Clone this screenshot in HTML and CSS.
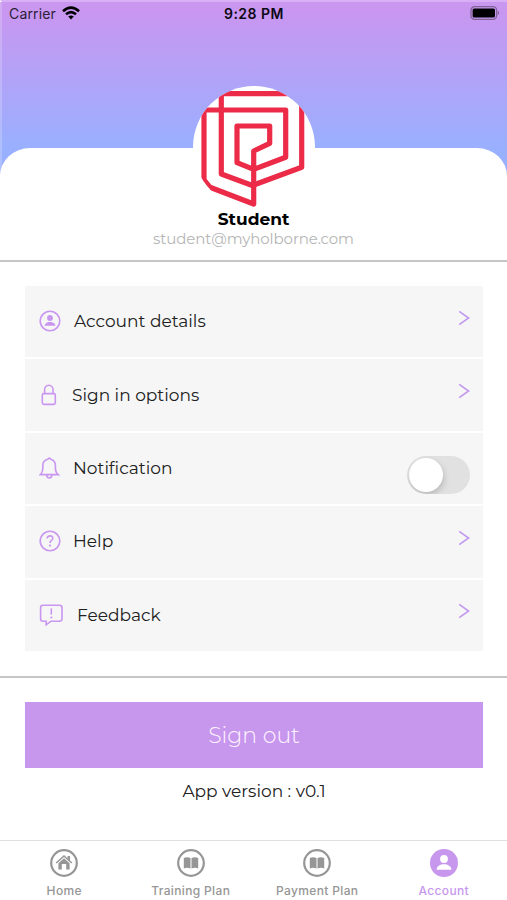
FILE: index.html
```
<!DOCTYPE html>
<html lang="en">
<head>
    <meta charset="UTF-8">
    <meta name="viewport" content="width=device-width, initial-scale=1.0">
    <title>Account</title>
    <link rel="stylesheet" href="styles.css">
</head>
<body>
    <header class="header">
        <div class="status-bar">
            <div class="carrier">
                <span>Carrier</span>
                <svg class="wifi" viewBox="0 0 18 14">
                    <path d="M1 5.2 Q9 -2 17 5.2" stroke-width="2.7"/>
                    <path d="M4 8.3 Q9 4 14 8.3" stroke-width="2.5"/>
                    <path class="wifi-dot" d="M6.2 10.6 Q9 8.4 11.8 10.6 L9 13.6 Z"/>
                </svg>
            </div>
            <div class="time">9:28 PM</div>
            <div class="battery-wrap">
                <svg class="battery" viewBox="0 0 30 14">
                    <rect x="1" y="0.7" width="25.6" height="12.6" rx="3.6" fill="none" stroke="#806396" stroke-width="1.3"/>
                    <rect x="2.6" y="2.4" width="22.4" height="9.2" rx="1.6" fill="#000"/>
                    <path d="M27.8 4.8 Q30.6 7 27.8 9.2 Z" fill="#806396"/>
                </svg>
            </div>
        </div>
    </header>

    <section class="profile">
        <div class="avatar">
            <svg viewBox="0 0 122 122">
                <path d="M60.7 99 L108.7 81.3 V7.7 H28.3 V88 L60.7 100"/>
                <path d="M60.7 83.3 L92.7 71.3 V24 H11 V94 L17 101.3 L60.7 118 V65 L76.7 57.3 V40 H44 V76.7 Z"/>
            </svg>
        </div>
        <h1 class="name">Student</h1>
        <p class="email">student@myholborne.com</p>
    </section>

    <main class="content">
        <ul class="menu">
            <li class="row">
                <svg class="icon" viewBox="0 0 22 22">
                    <circle cx="11" cy="11" r="9.8"/>
                    <circle class="solid" cx="11" cy="8" r="2.9"/>
                    <path class="solid" d="M5.6 15.8 C5.6 10.6 16.4 10.6 16.4 15.8 Z"/>
                </svg>
                <span class="label account">Account details</span>
                <svg class="chevron" viewBox="0 0 12 16"><path d="M1.2 1.4 L10.6 8 L1.2 14.6"/></svg>
            </li>
            <li class="row">
                <svg class="icon" viewBox="0 0 22 22">
                    <rect x="3.3" y="9.6" width="13" height="10.8" rx="1.6"/>
                    <path d="M5.6 9.6 V5.6 A4.2 4.4 0 0 1 14 5.6 V9.6"/>
                </svg>
                <span class="label sign-in">Sign in options</span>
                <svg class="chevron" viewBox="0 0 12 16"><path d="M1.2 1.4 L10.6 8 L1.2 14.6"/></svg>
            </li>
            <li class="row">
                <svg class="icon" viewBox="0 0 22 22">
                    <path d="M1.4 17.6 C3.2 16 3.8 14.4 3.8 11.6 V8.6 C3.8 5.4 6 3 8.8 2.3 Q10.3 0 11.8 2.3 C14.6 3 16.4 5.4 16.4 8.6 V11.6 C16.4 14.4 17.2 16 19.2 17.6 Z"/>
                    <path d="M7.7 17.8 C7.8 22 12.8 22 12.9 17.8"/>
                </svg>
                <span class="label notification">Notification</span>
                <span class="toggle"><span class="knob"></span></span>
            </li>
            <li class="row">
                <svg class="icon" viewBox="0 0 22 22">
                    <circle cx="11" cy="11" r="9.8"/>
                    <path d="M8.2 8.6 C8.3 5 13.8 5 13.8 8.4 C13.8 10.5 11 10.4 11 12.9"/>
                    <circle class="solid" cx="11" cy="15.6" r="1.1"/>
                </svg>
                <span class="label help">Help</span>
                <svg class="chevron" viewBox="0 0 12 16"><path d="M1.2 1.4 L10.6 8 L1.2 14.6"/></svg>
            </li>
            <li class="row">
                <svg class="icon wide" viewBox="0 0 25 22">
                    <path d="M4 1.2 H20.5 Q23 1.2 23 3.7 V14.7 Q23 17.2 20.5 17.2 H12 L7.2 20.8 V17.2 H4 Q1.6 17.2 1.6 14.7 V3.7 Q1.6 1.2 4 1.2 Z"/>
                    <path d="M12.3 4.4 V10.6"/>
                    <circle class="solid" cx="12.3" cy="13.5" r="1.1"/>
                </svg>
                <span class="label feedback">Feedback</span>
                <svg class="chevron" viewBox="0 0 12 16"><path d="M1.2 1.4 L10.6 8 L1.2 14.6"/></svg>
            </li>
        </ul>
    </main>

    <footer class="actions">
        <button class="sign-out">Sign out</button>
        <p class="version">App version : v0.1</p>
    </footer>

    <nav class="tabs">
        <a class="tab">
            <svg viewBox="0 0 28 28">
                <circle class="ring" cx="14" cy="14" r="12.8"/>
                <path d="M6.2 14 L14 7 L21.8 14" fill="none" stroke="currentColor" stroke-width="1.5"/>
                <path d="M17.6 7 H20 V12 L17.6 10 Z"/>
                <path d="M8.4 14.2 L14 9.3 L19.6 14.2 V20.6 H16.2 V15 H11.8 V20.6 H8.4 Z"/>
            </svg>
            <span class="tab-home">Home</span>
        </a>
        <a class="tab">
            <svg viewBox="0 0 28 28">
                <circle class="ring" cx="14" cy="14" r="12.8"/>
                <path d="M6.8 9 Q10 7.5 13.5 9 V19.5 Q10 18 6.8 19.5 Z M14.5 9 Q18 7.5 21.2 9 V19.5 Q18 18 14.5 19.5 Z"/>
            </svg>
            <span class="tab-training">Training Plan</span>
        </a>
        <a class="tab">
            <svg viewBox="0 0 28 28">
                <circle class="ring" cx="14" cy="14" r="12.8"/>
                <path d="M6.8 9 Q10 7.5 13.5 9 V19.5 Q10 18 6.8 19.5 Z M14.5 9 Q18 7.5 21.2 9 V19.5 Q18 18 14.5 19.5 Z"/>
            </svg>
            <span class="tab-payment">Payment Plan</span>
        </a>
        <a class="tab active">
            <svg viewBox="0 0 28 28">
                <circle cx="14" cy="14" r="14"/>
                <circle cx="14" cy="10" r="3.9" fill="#fff"/>
                <path d="M6.6 20.8 C6.6 13.4 21.4 13.4 21.4 20.8 Z" fill="#fff"/>
            </svg>
            <span class="tab-account">Account</span>
        </a>
    </nav>
</body>
</html>
```

FILE: styles.css
```
* {
    box-sizing: border-box;
    margin: 0;
    padding: 0;
}

body {
    height: 900px;
    display: flex;
    flex-direction: column;
    overflow: hidden;
    background-color: #fff;
    color: #202020;
    font-family: Montserrat, Inter, sans-serif;
}

svg {
    display: block;
    flex-shrink: 0;
}

/* header */
.header {
    height: 176px;
    flex-shrink: 0;
    border-top: 2px solid #d9b0f5;
    border-left: 2px solid rgba(255, 255, 255, 0.2);
    background: linear-gradient(#c996f0 10px, #99b0ff 150px);
    background-origin: border-box;
}

.status-bar {
    display: grid;
    grid-template-columns: 1fr 1fr 1fr;
    align-items: center;
    height: 22px;
    padding: 0 7px;
    color: #0c0812;
    font-family: Inter, sans-serif;
    font-size: 14px;
}

.carrier {
    display: flex;
    align-items: center;
    gap: 6px;
    color: #2c2038;
    letter-spacing: 0.15px;
}

.wifi {
    width: 18px;
    height: 14px;
    fill: none;
    stroke: #000;
}

.wifi-dot {
    fill: #000;
    stroke: none;
}

.time {
    padding-right: 1px;
    text-align: center;
    font-weight: 600;
    letter-spacing: 0.5px;
}

.battery {
    width: 30px;
    height: 14px;
    margin-left: auto;
}

/* profile card */
.profile {
    display: flex;
    flex-direction: column;
    align-items: center;
    height: 114px;
    flex-shrink: 0;
    margin-top: -28px;
    border-radius: 30px 30px 0 0 / 28px 28px 0 0;
    background-color: #fff;
    box-shadow: inset 0 -2px #c6c6c6;
}

.avatar {
    width: 122px;
    height: 122px;
    flex-shrink: 0;
    margin-top: -62px;
    border-radius: 50%;
    background-color: #fff;
    overflow: hidden;
}

.avatar path {
    fill: none;
    stroke: #ec2b48;
    stroke-width: 5.2;
    stroke-linejoin: round;
}

.name {
    color: #000;
    font-size: 17px;
    font-weight: 700;
    line-height: 22px;
}

.email {
    color: #b5b5b5;
    font-size: 15px;
    line-height: 18px;
    letter-spacing: -0.1px;
}

/* menu */
.content {
    height: 416px;
    flex-shrink: 0;
    padding: 24px 24px 0 25px;
    border-bottom: 2px solid #c6c6c6;
}

.menu {
    display: grid;
    grid-template-rows: repeat(5, 1fr);
    gap: 2px;
    height: 365px;
    list-style: none;
}

.row {
    display: flex;
    align-items: center;
    padding: 0 13px 1px 14px;
    background-color: #f6f6f6;
}

.icon {
    width: 22px;
    height: 22px;
    fill: none;
    stroke: #c996f0;
    stroke-width: 1.6;
}

.icon.wide {
    width: 25px;
}

.icon .solid {
    fill: #c996f0;
    stroke: none;
}

.label {
    margin-left: 12px;
    font-size: 17px;
}

.account {
    margin-left: 13px;
}

.sign-in {
    margin-left: 11px;
}

.feedback {
    margin-left: 13px;
}

.chevron {
    width: 12px;
    height: 16px;
    margin: 0 0 7px auto;
    fill: none;
    stroke: #c29aef;
    stroke-width: 1.7;
}

.toggle {
    display: flex;
    align-items: center;
    width: 63px;
    height: 38px;
    margin: 14px 0 0 auto;
    padding: 2px;
    border-radius: 19px;
    background-color: #e1e1e1;
    overflow: hidden;
}

.knob {
    width: 34px;
    height: 34px;
    border-radius: 50%;
    background-color: #fff;
    box-shadow: 1px 3px 6px rgba(0, 0, 0, 0.18);
}

/* bottom */
.actions {
    flex: 1;
    padding: 24px 24px 0 25px;
}

.sign-out {
    display: block;
    width: 100%;
    height: 66px;
    border: none;
    background-color: #c797ee;
    color: #fff4ff;
    font-family: inherit;
    font-size: 22px;
    font-weight: 300;
}

.version {
    margin-top: 12px;
    font-size: 17px;
    line-height: 22px;
    text-align: center;
}

.tabs {
    display: grid;
    grid-template-columns: repeat(4, 1fr);
    height: 60px;
    padding-left: 1px;
    border-top: 1px solid #e0e0e0;
    font-family: Inter, sans-serif;
    font-size: 12px;
    font-weight: 500;
}

.tab {
    display: flex;
    flex-direction: column;
    align-items: center;
    gap: 6px;
    padding-top: 8px;
    color: #969696;
    line-height: 16px;
    letter-spacing: 0.35px;
}

.tab svg {
    width: 28px;
    height: 28px;
    fill: currentColor;
}

.tab .ring {
    fill: none;
    stroke: currentColor;
    stroke-width: 2.2;
}

.tab.active {
    color: #c797ee;
}
```
